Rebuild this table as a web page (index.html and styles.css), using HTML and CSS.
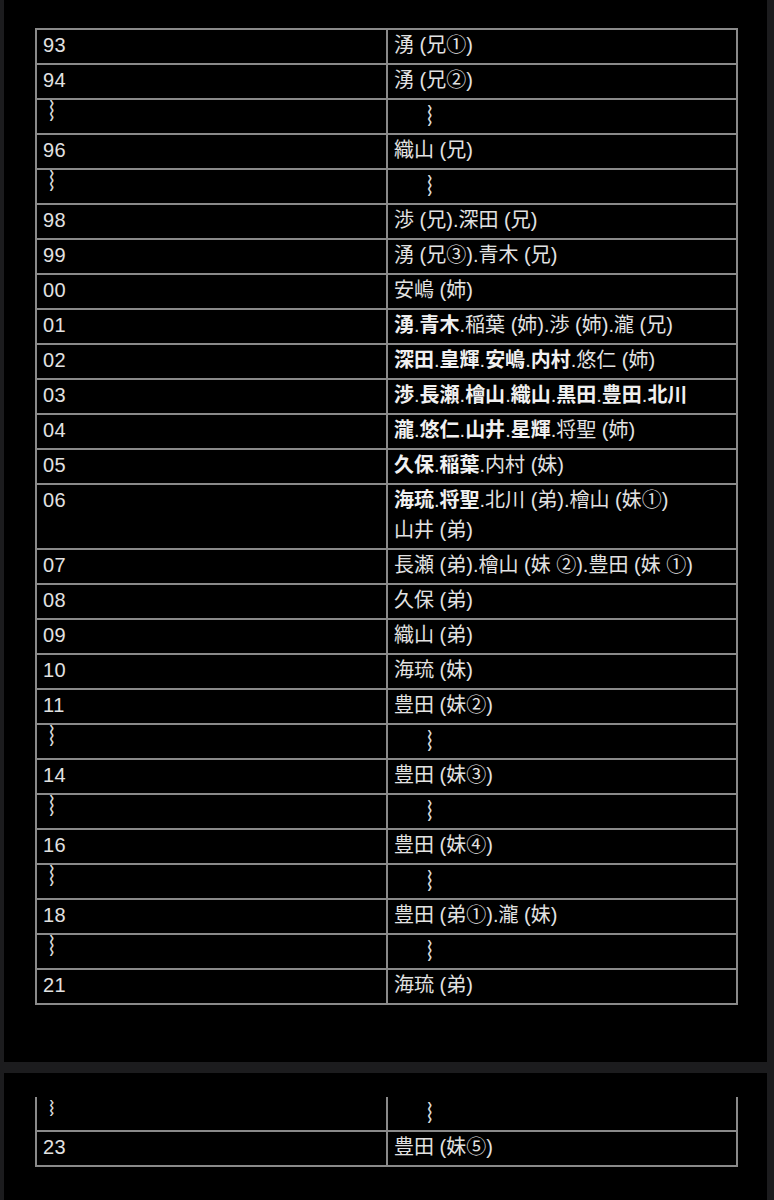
FILE: index.html
```html
<!DOCTYPE html>
<html lang="ja">
<head>
<meta charset="utf-8">
<link rel="stylesheet" href="styles.css">
</head>
<body>
<div class="panel panel-top">
  <table class="grid">
    <tr><td class="year">93</td><td>湧 (兄①)</td></tr>
    <tr><td class="year">94</td><td>湧 (兄②)</td></tr>
    <tr><td class="year"><span class="wave-l">︴</span></td><td><span class="wave-r">︴</span></td></tr>
    <tr><td class="year">96</td><td>織山 (兄)</td></tr>
    <tr><td class="year"><span class="wave-l">︴</span></td><td><span class="wave-r">︴</span></td></tr>
    <tr><td class="year">98</td><td>渉 (兄).深田 (兄)</td></tr>
    <tr><td class="year">99</td><td>湧 (兄③).青木 (兄)</td></tr>
    <tr><td class="year">00</td><td>安嶋 (姉)</td></tr>
    <tr><td class="year">01</td><td><b>湧</b>.<b>青木</b>.稲葉 (姉).渉 (姉).瀧 (兄)</td></tr>
    <tr><td class="year">02</td><td><b>深田</b>.<b>皇輝</b>.<b>安嶋</b>.<b>内村</b>.悠仁 (姉)</td></tr>
    <tr><td class="year">03</td><td><b>渉</b>.<b>長瀬</b>.<b>檜山</b>.<b>織山</b>.<b>黒田</b>.<b>豊田</b>.<b>北川</b></td></tr>
    <tr><td class="year">04</td><td><b>瀧</b>.<b>悠仁</b>.<b>山井</b>.<b>星輝</b>.将聖 (姉)</td></tr>
    <tr><td class="year">05</td><td><b>久保</b>.<b>稲葉</b>.内村 (妹)</td></tr>
    <tr><td class="year">06</td><td><b>海琉</b>.<b>将聖</b>.北川 (弟).檜山 (妹①)<br>山井 (弟)</td></tr>
    <tr><td class="year">07</td><td>長瀬 (弟).檜山 (妹 ②).豊田 (妹 ①)</td></tr>
    <tr><td class="year">08</td><td>久保 (弟)</td></tr>
    <tr><td class="year">09</td><td>織山 (弟)</td></tr>
    <tr><td class="year">10</td><td>海琉 (妹)</td></tr>
    <tr><td class="year">11</td><td>豊田 (妹②)</td></tr>
    <tr><td class="year"><span class="wave-l">︴</span></td><td><span class="wave-r">︴</span></td></tr>
    <tr><td class="year">14</td><td>豊田 (妹③)</td></tr>
    <tr><td class="year"><span class="wave-l">︴</span></td><td><span class="wave-r">︴</span></td></tr>
    <tr><td class="year">16</td><td>豊田 (妹④)</td></tr>
    <tr><td class="year"><span class="wave-l">︴</span></td><td><span class="wave-r">︴</span></td></tr>
    <tr><td class="year">18</td><td>豊田 (弟①).瀧 (妹)</td></tr>
    <tr><td class="year"><span class="wave-l">︴</span></td><td><span class="wave-r">︴</span></td></tr>
    <tr><td class="year">21</td><td>海琉 (弟)</td></tr>
  </table>
</div>
<div class="panel panel-bottom">
  <table class="grid grid-cut">
    <tr class="cut-row"><td class="year"><span class="wave-l wave-cut">︴</span></td><td><span class="wave-r">︴</span></td></tr>
    <tr><td class="year">23</td><td>豊田 (妹⑤)</td></tr>
  </table>
</div>
</body>
</html>
```

FILE: styles.css
```css
html, body {
  margin: 0;
  padding: 0;
  background: #1c1c1e;
  overflow: hidden;
}

body {
  font-family: "Liberation Sans", "Noto Sans CJK JP", sans-serif;
  color: #e2e2e2;
}

.panel {
  background: #000;
  margin-left: 4px;
  width: 763px;
  box-sizing: border-box;
  padding-left: 31px;
}

.panel-top {
  height: 1062px;
  padding-top: 28px;
}

.panel-bottom {
  margin-top: 11px;
  height: 127px;
  padding-top: 24px;
}

.grid {
  border-collapse: collapse;
  width: 703px;
  table-layout: fixed;
}

.grid td {
  border: 2px solid #8a8a8a;
  font-size: 20px;
  line-height: 30px;
  height: 30px;
  padding: 0 7px 3px 6px;
  vertical-align: top;
  white-space: nowrap;
}

.grid td.year {
  width: 351px;
  box-sizing: border-box;
  letter-spacing: 0.5px;
}

.grid b {
  font-weight: 700;
  color: #f0f0f0;
}

.wave-l,
.wave-r {
  font-family: "Noto Sans CJK JP", sans-serif;
  display: inline-block;
  vertical-align: top;
  line-height: 30px;
  height: 30px;
  color: #d8d8d8;
}

.wave-l {
  transform: translate(11px, -5px) scale(1.5, 1.05);
}

.wave-r {
  margin-left: 38px;
  transform: scale(1.5, 1.05);
}

.wave-cut {
  transform: translate(11px, -7px) scale(1.5, 0.8);
  transform-origin: bottom;
}

.grid-cut .cut-row td {
  border-top: none;
  height: 28px;
}
```
